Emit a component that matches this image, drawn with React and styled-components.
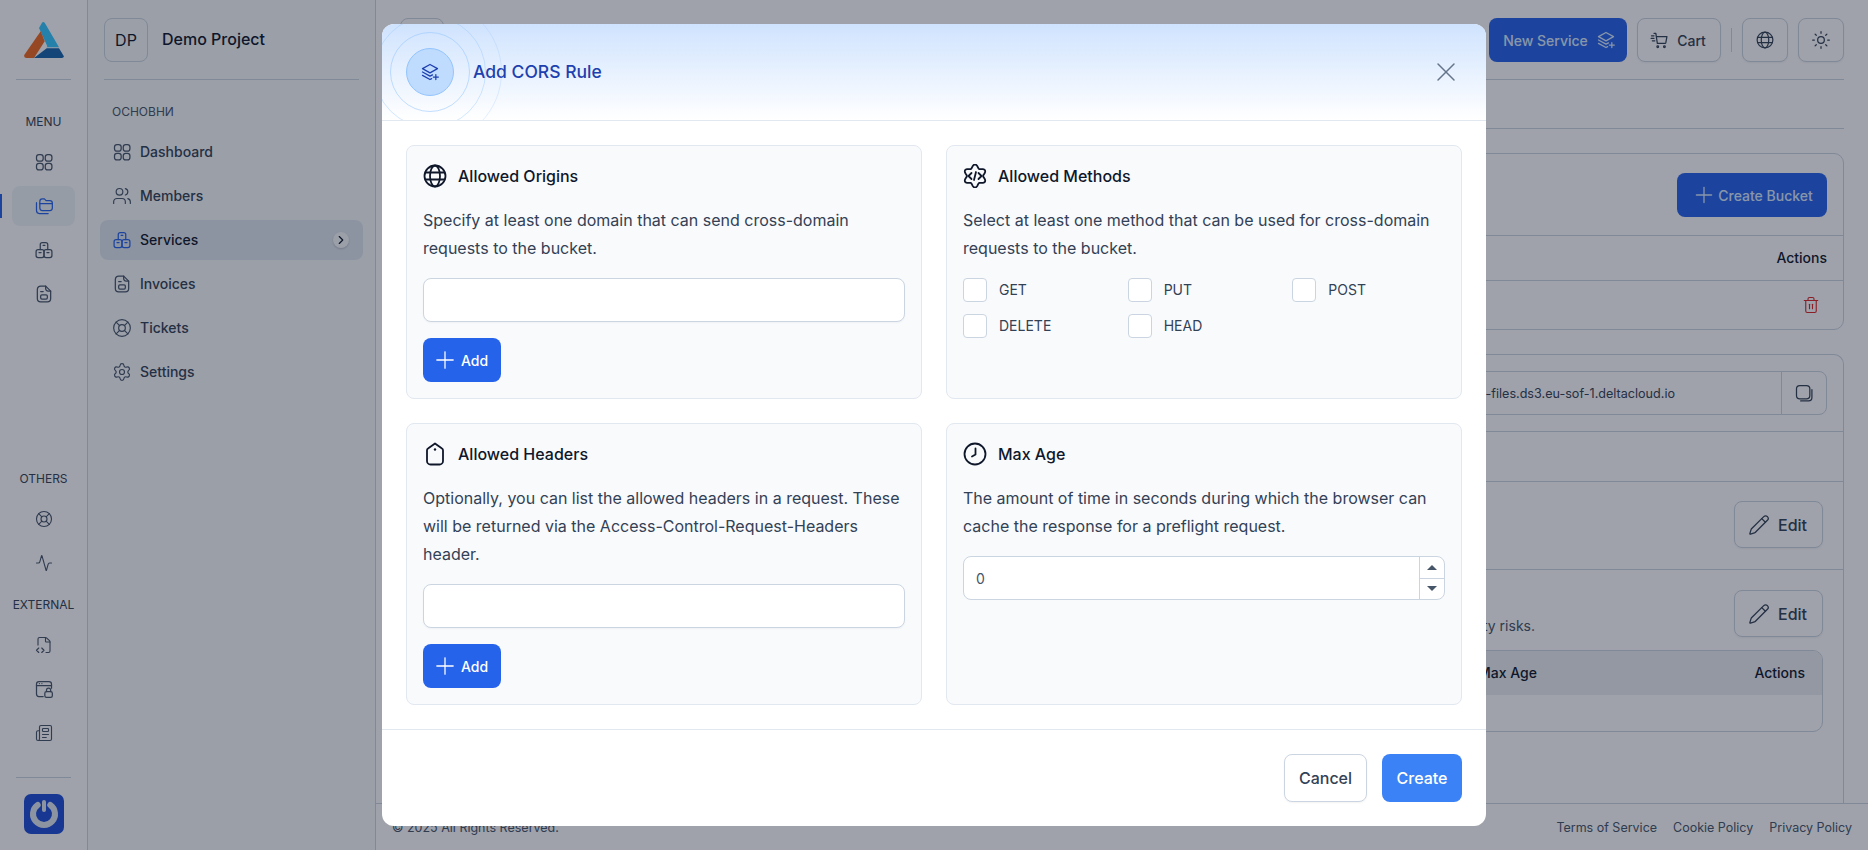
import React from 'react';
import styled, { createGlobalStyle } from 'styled-components';
import { Activity, FileCode2, LifeBuoy, Newspaper, Pencil, Plus, Settings, Sun, Trash2, Users, X, ChevronRight } from 'lucide-react';

const FONT = 'Inter, Roboto, "Noto Sans", sans-serif';

const Global = createGlobalStyle`
  html, body { margin: 0; padding: 0; height: 100%; background: #fff; }
  * { box-sizing: border-box; }
  body { font-family: ${FONT}; color: #0f172a; overflow: hidden; }
  #root { height: 850px; }
`;

const Page = styled.div`display: flex; height: 850px; width: 1868px; position: relative; overflow: hidden;`;
const Rail = styled.aside`width: 88px; flex: none; background: #fff; border-right: 1px solid #cbd5e1; display: flex; flex-direction: column; align-items: center; padding-top: 22px;`;
const LogoBox = styled.div`height: 36px; display: flex; align-items: center;`;
const RailRule = styled.div`width: 55px; height: 1px; background: #cbd5e1; margin-top: ${p => p.$top}px; flex: none;`;
const RailLabel = styled.div`font-size: 12px; line-height: 16px; color: #334155; margin-top: ${p => p.$top}px;`;
const RailItem = styled.div`width: 63px; height: 40px; margin-top: ${p => p.$first ? 12 : 4}px; display: flex; align-items: center; justify-content: center; border-radius: 8px; color: ${p => p.$active ? '#2563eb' : '#475569'}; background: ${p => p.$active ? '#f1f5f9' : 'transparent'}; position: relative;
  ${p => p.$active && `&::before { content: ''; position: absolute; left: -12px; top: 8px; width: 2px; height: 24px; background: #2563eb; }`}
`;
const Spacer = styled.div`flex: 1;`;
const PowerBox = styled.div`margin: 16px 0 16px; height: 40px;`;

const Side = styled.aside`width: 288px; flex: none; background: #f8fafc; border-right: 1px solid #cbd5e1; padding: 18px 12px 0;`;
const ProjectRow = styled.div`display: flex; align-items: center; gap: 14px; margin: 0 4px; height: 44px;`;
const Avatar = styled.div`width: 44px; height: 44px; border: 1px solid #cbd5e1; border-radius: 8px; display: flex; align-items: center; justify-content: center; font-size: 16px; font-weight: 400; color: #0f172a;`;
const ProjectName = styled.div`font-size: 16px; font-weight: 500; color: #0f172a; margin-top: -2px;`;
const SideRule = styled.div`height: 1px; background: #cbd5e1; margin: 17px 4px 0;`;
const SideLabel = styled.div`font-size: 12px; line-height: 16px; color: #475569; margin: 24px 0 12px 12px;`;
const NavItem = styled.div`height: 40px; margin-bottom: 4px; display: flex; align-items: center; gap: 8px; padding: 0 12px; border-radius: 8px; font-size: 14px; font-weight: 450; color: ${p => p.$active ? '#0f172a' : '#334155'}; background: ${p => p.$active ? '#e2e8f0' : 'transparent'};
  svg.nav { color: ${p => p.$active ? '#2563eb' : '#475569'}; flex: none; }
`;
const NavText = styled.span`margin-top: -2px;`;
const NavChevron = styled.span`margin-left: auto; margin-right: 2px; width: 16px; height: 16px; border-radius: 50%; background: #f8fafc; box-shadow: 0 1px 2px rgba(15,23,42,.2); display: flex; align-items: center; justify-content: center; color: #0f172a;`;

const Main = styled.main`flex: 1; display: flex; flex-direction: column; min-width: 0;`;
const Content = styled.div`flex: 1; padding: 18px 24px 0; min-height: 0; display: flex; flex-direction: column;`;
const Header = styled.header`display: flex; align-items: center; height: 44px; gap: 10px;`;
const HeadSquare = styled.div`width: 44px; height: 44px; border: 1px solid #cbd5e1; border-radius: 8px;`;
const HeadGrow = styled.div`flex: 1;`;
const PrimaryBtn = styled.button`height: 44px; width: ${p => p.$w}px; flex: none; border: 0; border-radius: 8px; background: #2563eb; color: #dbeafe; display: flex; align-items: center; justify-content: center; gap: ${p => p.$gap}px; padding: 0 0 0 ${p => p.$shift || 0}px; font: 450 14px ${FONT};`;
const GhostBtn = styled.button`height: 44px; border: 1px solid #cbd5e1; border-radius: 8px; background: #fff; color: #334155; display: flex; align-items: center; justify-content: center; gap: 8px; padding: 0 ${p => p.$shift || 0}px 0 0; width: ${p => p.$w}px; font: 500 14px ${FONT}; box-shadow: 0 1px 2px rgba(15,23,42,.05);`;
const VRule = styled.div`width: 1px; height: 24px; background: #cbd5e1;`;
const HRule = styled.div`height: 1px; background: #cbd5e1; margin-top: 17px;`;
const Tabs = styled.div`height: 49px; border-bottom: 1px solid #cbd5e1;`;
const Card = styled.section`border: 1px solid #cbd5e1; border-radius: 10px; margin-top: 24px;`;
const BucketTop = styled.div`height: 82px; padding: 19px 16px 0; display: flex; justify-content: flex-end; border-bottom: 1px solid #cbd5e1;`;
const HeadRow = styled.div`height: 45px; display: flex; align-items: center; justify-content: flex-end; padding: 0 16px 2px; border-bottom: 1px solid #cbd5e1; font-size: 14px; font-weight: 450; color: #0f172a;`;
const BodyRow = styled.div`height: 48px; display: flex; align-items: center; justify-content: flex-end; padding: 0 16px;`;
const TrashBox = styled.span`color: #dc2626; display: flex; margin-right: 7px;`;
const TallCard = styled(Card)`flex: 1; border-bottom: 0; border-bottom-left-radius: 0; border-bottom-right-radius: 0; display: flex; flex-direction: column;`;
const EndpointBlock = styled.div`padding: 16px; height: 77px; border-bottom: 1px solid #cbd5e1;`;
const Field = styled.div`height: 44px; border: 1px solid #cbd5e1; border-radius: 8px; display: flex; align-items: center; font-size: 12.6px; color: #334155;`;
const FieldText = styled.span`flex: 1; white-space: nowrap; text-align: right; padding-right: 106px;`;
const CopyCell = styled.span`width: 45px; height: 100%; border-left: 1px solid #cbd5e1; display: flex; align-items: center; justify-content: center; color: #334155; flex: none;`;
const Band = styled.div`height: 50px; border-bottom: 1px solid #cbd5e1;`;
const Section = styled.div`padding: 19px 20px 0 16px; display: flex; justify-content: flex-end; border-bottom: 1px solid #cbd5e1; height: 88px;`;
const SectionPlain = styled.div`padding: 20px 20px 0 16px; display: flex; font-size: 14px; color: #475569;`;
const SectionNote = styled.div`flex: 1; padding-top: 26px; margin-right: 199px; text-align: right; line-height: 20px;`;
const EditBtn = styled(GhostBtn)`width: 89px; height: 47px; font-size: 16px; background: transparent; gap: 8px; flex: none;`;
const InnerTable = styled.div`margin: 13px 20px 0 16px; height: 82px; border: 1px solid #cbd5e1; border-radius: 10px; overflow: hidden;`;
const InnerHead = styled.div`height: 44px; padding-bottom: 2px; background: #ebeef3; display: grid; grid-template-columns: 1fr 177px 167px; align-items: center; font-size: 14px; font-weight: 450; color: #0f172a;`;
const RightCell = styled.span`text-align: right; padding-right: 17px;`;
const Foot = styled.footer`height: 47px; flex: none; border-top: 1px solid #cbd5e1; display: flex; align-items: center; padding: 0 16px; font-size: 12.5px; color: #475569;`;
const FootLinks = styled.div`margin-left: auto; display: flex; gap: 16px;`;

const Overlay = styled.div`position: absolute; inset: 0; background: rgba(15,23,42,.4);`;
const Dialog = styled.div`position: absolute; left: 382px; top: 24px; width: 1104px; height: 802px; background: #fff; border-radius: 12px; overflow: hidden; display: flex; flex-direction: column;`;
const DlgHead = styled.div`height: 97px; flex: none; border-bottom: 1px solid #e2e8f0; background: linear-gradient(to bottom, #cfe3fe, #ffffff); position: relative; overflow: hidden; display: flex; align-items: center; padding: 0 24px; gap: 19px;`;
const Ring = styled.span`position: absolute; left: ${p => (46 - p.$d) / 2}px; top: ${p => (46 - p.$d) / 2}px; width: ${p => p.$d}px; height: ${p => p.$d}px; border-radius: 50%; border: 1px solid rgba(147,197,253,${p => p.$a});`;
const HeadIcon = styled.div`width: 48px; height: 48px; border-radius: 50%; background: #bfdbfe; border: 1px solid #93c5fd; display: flex; align-items: center; justify-content: center; color: #1e40af; position: relative; flex: none;`;
const DlgTitle = styled.h2`margin: 0 0 1px; font-size: 17.5px; font-weight: 500; color: #1e40af;`;
const CloseBtn = styled.span`margin-left: auto; color: #64748b; display: flex; margin-right: 0;`;
const DlgBody = styled.div`flex: 1; padding: 24px; display: grid; grid-template-columns: 516px 516px; grid-template-rows: 254px 282px; gap: 24px; border-bottom: 1px solid #e2e8f0;`;
const Panel = styled.div`background: #f8fafc; border: 1px solid #e2e8f0; border-radius: 8px; padding: 18px 16px 16px; display: flex; flex-direction: column;`;
const PanelHead = styled.div`display: flex; align-items: center; gap: 11px; height: 24px; font-size: 16px; font-weight: 450; color: #0f172a; svg { flex: none; }`;
const Desc = styled.p`margin: 18px 0 0; font-size: 16px; line-height: 28px; color: #334155;`;
const TextBox = styled.div`height: 44px; margin-top: 16px; background: #fff; border: 1px solid #cbd5e1; border-radius: 8px; flex: none; box-shadow: 0 1px 2px rgba(15,23,42,.04);`;
const AddBtn = styled.button`margin-top: 16px; width: 78px; height: 44px; flex: none; border: 0; border-radius: 8px; background: #2563eb; color: #fff; display: flex; align-items: center; gap: 2px; padding: 0 0 0 8px; font: 450 14px ${FONT};`;
const Methods = styled.div`margin-top: 16px; display: grid; grid-template-columns: repeat(3, 1fr); gap: 12px;`;
const Method = styled.label`display: flex; align-items: center; gap: 12px; height: 24px; font-size: 14px; color: #334155;`;
const MethodText = styled.span`margin-top: -1px;`;
const Check = styled.span`width: 24px; height: 24px; border: 1px solid #cbd5e1; border-radius: 4px; background: #fff; flex: none;`;
const NumberBox = styled.div`height: 44px; margin-top: 16px; background: #fff; border: 1px solid #cbd5e1; border-radius: 8px; display: flex; align-items: center; font-size: 14px; color: #475569; padding-left: 12px; overflow: hidden;`;
const NumberVal = styled.span`flex: 1;`;
const Stepper = styled.div`width: 25px; height: 100%; border-left: 1px solid #cbd5e1; display: flex; flex-direction: column;`;
const Step = styled.div`flex: 1; display: flex; align-items: center; justify-content: center; & + & { border-top: 1px solid #cbd5e1; }`;
const Tri = styled.span`width: 0; height: 0; border-left: 5px solid transparent; border-right: 5px solid transparent; ${p => p.$up ? 'border-bottom: 5px solid #475569;' : 'border-top: 5px solid #475569;'}`;
const DlgFoot = styled.div`height: 96px; flex: none; display: flex; justify-content: flex-end; align-items: flex-start; gap: 15px; padding: 24px 24px 0;`;
const Cancel = styled.button`width: 83px; height: 48px; background: #fff; border: 1px solid #cbd5e1; border-radius: 8px; font: 450 16px ${FONT}; color: #334155; box-shadow: 0 1px 2px rgba(15,23,42,.05);`;
const Create = styled.button`width: 80px; height: 48px; background: #3b82f6; border: 0; border-radius: 8px; font: 450 16px ${FONT}; color: #fff;`;

const S = ({ size = 20, w = 1.5, children, className }) => (
  <svg className={className} width={size} height={size} viewBox="0 0 24 24" fill="none" stroke="currentColor" strokeWidth={w} strokeLinecap="round" strokeLinejoin="round">{children}</svg>
);
const DashIcon = p => <S {...p}><rect x="3" y="3" width="8" height="8" rx="3"/><rect x="13.500" y="3" width="8" height="8" rx="3"/><rect x="3" y="13.500" width="8" height="8" rx="3"/><rect x="13.500" y="13.500" width="8" height="8" rx="3"/></S>;
const BoxesIcon = p => <S {...p}><path d="M7.500 11.500V5.500a2.500 2.500 0 0 1 2.500-2.500h4a2.500 2.500 0 0 1 2.500 2.500v6"/><rect x="2.500" y="11.500" width="9.500" height="9.500" rx="2.500"/><rect x="12" y="11.500" width="9.500" height="9.500" rx="2.500"/><path d="M11 6.500h2M6 15h2.500M15.500 15H18"/></S>;
const InvoiceIcon = p => <S {...p}><path d="M14 2.500H8a4 4 0 0 0-4 4v11a4 4 0 0 0 4 4h8a4 4 0 0 0 4-4V8.500z"/><path d="M14 2.500v3a3 3 0 0 0 3 3h3"/><rect x="8" y="13" width="8" height="5" rx="1.500"/><path d="M8 9h3"/></S>;
const FoldersIcon = p => <S {...p}><path d="M7 6.500a3 3 0 0 1 3-3h2.500l2 2H19a3 3 0 0 1 3 3v6a3 3 0 0 1-3 3h-9a3 3 0 0 1-3-3z"/><path d="M7 9h15"/><path d="M3 8v9.500a3.500 3.500 0 0 0 3.500 3.500H17"/></S>;
const BrowserLock = p => <S {...p}><path d="M11 21H6a3 3 0 0 1-3-3V6a3 3 0 0 1 3-3h12a3 3 0 0 1 3 3v5"/><path d="M3 8h18M6.500 5.500h.01M9.500 5.500h.01"/><rect x="13" y="15" width="9" height="7" rx="2"/><path d="M15 15v-1.500a2.500 2.500 0 0 1 5 0V15"/></S>;
const LayersPlus = p => <S {...p}><path d="M12 3 3 8l9 5 9-5z"/><path d="m3 12 9 5 3-1.600"/><path d="m3 16 9 5 2-1"/><path d="M19 15v6M16 18h6"/></S>;
const CartIcon = p => <S {...p}><path d="M6 4h2.200l1.800 12h9.200a1 1 0 0 0 1-.8L21.500 8H9"/><path d="M3 7h3M2.500 10h3.500M4 13h3"/><circle cx="10.500" cy="20" r="1"/><circle cx="18.500" cy="20" r="1"/></S>;
const CopyIcon = p => <S {...p}><rect x="3" y="3" width="16" height="16" rx="4"/><path d="M21.500 8v9.500a4 4 0 0 1-4 4H8"/></S>;
const TagIcon = p => <S {...p}><path d="M12 1.500 5 6.500A2 2 0 0 0 4 8.200V19a3.500 3.500 0 0 0 3.500 3.500h9A3.500 3.500 0 0 0 20 19V8.200a2 2 0 0 0-1-1.700z"/><path d="M12 7.500h.01" strokeWidth="2.400"/></S>;
const ClockIcon = p => <S {...p}><circle cx="12" cy="12" r="10.500"/><path d="M12.500 6.500v6l-3.500 2"/></S>;
const GlobeIcon = p => <S {...p}><circle cx="12" cy="12" r="10.500"/><ellipse cx="12" cy="12" rx="5" ry="10.500"/><path d="M2.500 8.500h19M2.500 15.500h19"/></S>;

const gearPath = (() => {
  const pts = [];
  for (let i = 0; i < 96; i++) {
    const t = (i / 96) * Math.PI * 2;
    const r = 9.8 + 1.7 * Math.cos(6 * t);
    pts.push(`${(12 + r * Math.sin(t)).toFixed(2)} ${(12 - r * Math.cos(t)).toFixed(2)}`);
  }
  return `M${pts.join('L')}Z`;
})();
const BadgeCode = p => <S {...p}><path d={gearPath}/><path d="m8.500 9-3 3 3 3M15.500 9l3 3-3 3M13 8l-2 8"/></S>;

const Logo = () => (
  <svg width="40" height="36" viewBox="0 0 40 36">
    <path d="M15 6 18 .8q1.300-1.600 2.700 0L35 25.300H22.700l.6-1z" fill="#36c8ff"/>
    <path d="M16.700 9.300 20.700 19.300 10 36H2.500Q-.6 35.700.4 32.700z" fill="#f0681f"/>
    <path d="M22.700 26.300H35l4.600 7.400q.8 2-1.800 2.300H10z" fill="#1664ad"/>
  </svg>
);
const Power = () => (
  <svg width="40" height="40" viewBox="0 0 40 40">
    <rect width="40" height="40" rx="7" fill="#1d4ed8"/>
    <path d="M13.700 11A11 11 0 1 0 26.300 11" fill="none" stroke="#e2e8f0" strokeWidth="6" strokeLinecap="round"/>
    <rect x="18" y="6" width="4" height="12" rx="2" fill="#e2e8f0"/>
  </svg>
);

export default function App() {
  return (
    <Page>
      <Global />
      <Rail>
        <LogoBox><Logo /></LogoBox>
        <RailRule $top={21} />
        <RailLabel $top={34}>MENU</RailLabel>
        <RailItem $first><DashIcon /></RailItem>
        <RailItem $active><FoldersIcon /></RailItem>
        <RailItem><BoxesIcon /></RailItem>
        <RailItem><InvoiceIcon /></RailItem>
        <Spacer />
        <RailLabel $top={0}>OTHERS</RailLabel>
        <RailItem $first><LifeBuoy size={18} strokeWidth={1.5} /></RailItem>
        <RailItem><Activity size={18} strokeWidth={1.5} /></RailItem>
        <RailLabel $top={14}>EXTERNAL</RailLabel>
        <RailItem $first><FileCode2 size={18} strokeWidth={1.5} /></RailItem>
        <RailItem><BrowserLock /></RailItem>
        <RailItem><Newspaper size={18} strokeWidth={1.5} /></RailItem>
        <RailRule $top={24} />
        <PowerBox><Power /></PowerBox>
      </Rail>
      <Side>
        <ProjectRow><Avatar>DP</Avatar><ProjectName>Demo Project</ProjectName></ProjectRow>
        <SideRule />
        <SideLabel>ОСНОВНИ</SideLabel>
        <NavItem><DashIcon className="nav" /><NavText>Dashboard</NavText></NavItem>
        <NavItem><Users size={20} strokeWidth={1.4} className="nav" /><NavText>Members</NavText></NavItem>
        <NavItem $active><BoxesIcon className="nav" /><NavText>Services</NavText><NavChevron><ChevronRight size={14} strokeWidth={2} /></NavChevron></NavItem>
        <NavItem><InvoiceIcon className="nav" /><NavText>Invoices</NavText></NavItem>
        <NavItem><LifeBuoy size={20} strokeWidth={1.4} className="nav" /><NavText>Tickets</NavText></NavItem>
        <NavItem><Settings size={20} strokeWidth={1.4} className="nav" /><NavText>Settings</NavText></NavItem>
      </Side>
      <Main>
        <Content>
          <Header>
            <HeadSquare />
            <HeadGrow />
            <PrimaryBtn $w={138} $gap={8} $shift={3}>New Service <LayersPlus size={20} /></PrimaryBtn>
            <GhostBtn $w={84} $shift={3}><CartIcon size={20} />Cart</GhostBtn>
            <VRule />
            <GhostBtn $w={46}><GlobeIcon size={18} w={1.600} /></GhostBtn>
            <GhostBtn $w={46}><Sun size={20} strokeWidth={1.5} /></GhostBtn>
          </Header>
          <HRule />
          <Tabs />
          <Card>
            <BucketTop><PrimaryBtn $w={150} $gap={1}><Plus size={26} strokeWidth={1.2} />Create Bucket</PrimaryBtn></BucketTop>
            <HeadRow><span>Actions</span></HeadRow>
            <BodyRow><TrashBox><Trash2 size={18} strokeWidth={1.5} /></TrashBox></BodyRow>
          </Card>
          <TallCard>
            <EndpointBlock>
              <Field><FieldText>demo-files.ds3.eu-sof-1.deltacloud.io</FieldText><CopyCell><CopyIcon /></CopyCell></Field>
            </EndpointBlock>
            <Band />
            <Section><EditBtn $shift={2}><Pencil size={22} strokeWidth={1.4} />Edit</EditBtn></Section>
            <SectionPlain>
              <SectionNote>Cross-origin requests can introduce security risks.</SectionNote>
              <EditBtn $shift={2}><Pencil size={22} strokeWidth={1.4} />Edit</EditBtn>
            </SectionPlain>
            <InnerTable>
              <InnerHead><span /><span>Max Age</span><RightCell>Actions</RightCell></InnerHead>
            </InnerTable>
          </TallCard>
        </Content>
        <Foot>
          <span>© 2025 All Rights Reserved.</span>
          <FootLinks><span>Terms of Service</span><span>Cookie Policy</span><span>Privacy Policy</span></FootLinks>
        </Foot>
      </Main>
      <Overlay />
      <Dialog>
        <DlgHead>
          <HeadIcon>
            <Ring $d={80} $a={.55} />
            <Ring $d={112} $a={.4} />
            <Ring $d={144} $a={.25} />
            <LayersPlus size={20} />
          </HeadIcon>
          <DlgTitle>Add CORS Rule</DlgTitle>
          <CloseBtn><X size={32} strokeWidth={1.1} /></CloseBtn>
        </DlgHead>
        <DlgBody>
          <Panel>
            <PanelHead><GlobeIcon size={24} w={1.800} />Allowed Origins</PanelHead>
            <Desc>Specify at least one domain that can send cross-domain requests to the bucket.</Desc>
            <TextBox />
            <AddBtn><Plus size={28} strokeWidth={1.100} />Add</AddBtn>
          </Panel>
          <Panel>
            <PanelHead><BadgeCode size={24} w={1.800} />Allowed Methods</PanelHead>
            <Desc>Select at least one method that can be used for cross-domain requests to the bucket.</Desc>
            <Methods>
              {['GET', 'PUT', 'POST', 'DELETE', 'HEAD'].map(m => <Method key={m}><Check /><MethodText>{m}</MethodText></Method>)}
            </Methods>
          </Panel>
          <Panel>
            <PanelHead><TagIcon size={24} w={1.800} />Allowed Headers</PanelHead>
            <Desc>Optionally, you can list the allowed headers in a request. These will be returned via the Access-Control-Request-Headers header.</Desc>
            <TextBox />
            <AddBtn><Plus size={28} strokeWidth={1.100} />Add</AddBtn>
          </Panel>
          <Panel>
            <PanelHead><ClockIcon size={24} w={1.800} />Max Age</PanelHead>
            <Desc>The amount of time in seconds during which the browser can cache the response for a preflight request.</Desc>
            <NumberBox><NumberVal>0</NumberVal><Stepper><Step><Tri $up /></Step><Step><Tri /></Step></Stepper></NumberBox>
          </Panel>
        </DlgBody>
        <DlgFoot><Cancel>Cancel</Cancel><Create>Create</Create></DlgFoot>
      </Dialog>
    </Page>
  );
}
